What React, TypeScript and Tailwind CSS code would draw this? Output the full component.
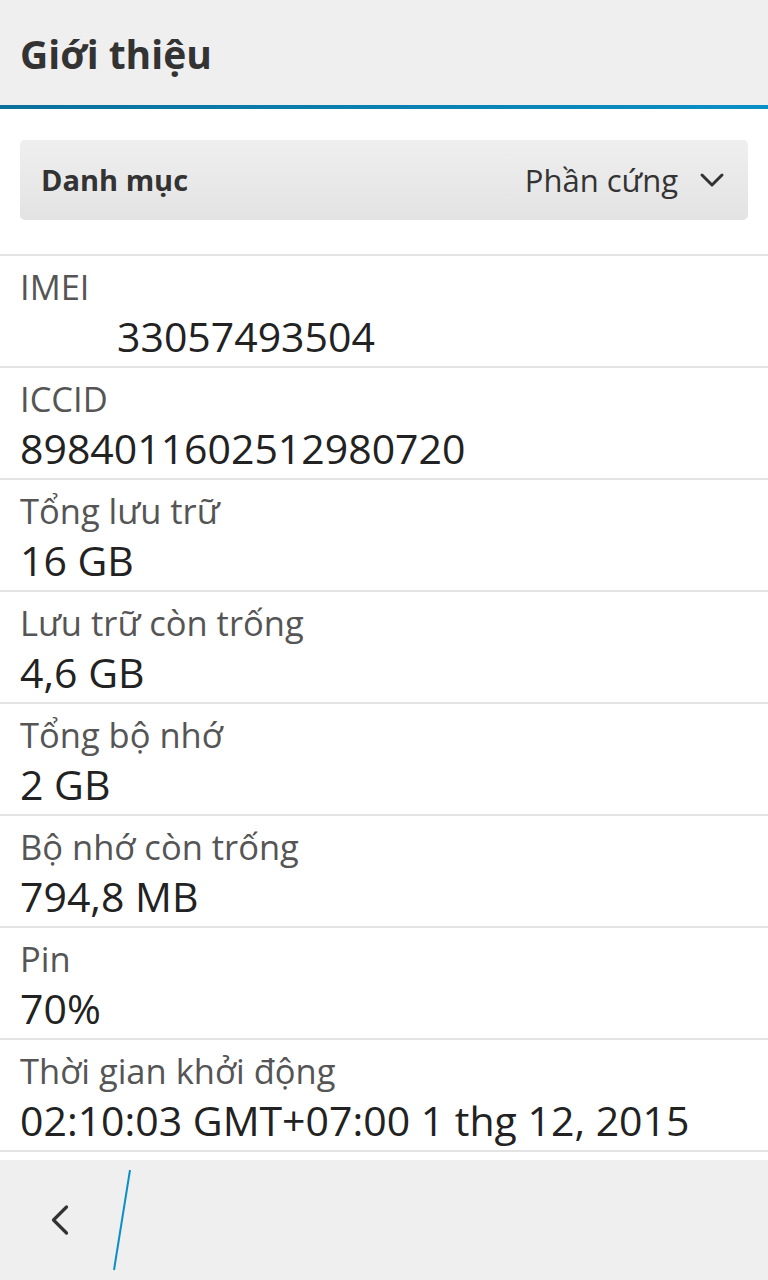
import { ChevronDown, ChevronLeft } from "lucide-react";

const rows = [
  { label: "IMEI", value: "33057493504", indent: true },
  { label: "ICCID", value: "898401160251298 0720".replace(" ", "") },
  { label: "Tổng lưu trữ", value: "16 GB" },
  { label: "Lưu trữ còn trống", value: "4,6 GB" },
  { label: "Tổng bộ nhớ", value: "2 GB" },
  { label: "Bộ nhớ còn trống", value: "794,8 MB" },
  { label: "Pin", value: "70%" },
  { label: "Thời gian khởi động", value: "02:10:03 GMT+07:00 1 thg 12, 2015" },
];

export default function App() {
  return (
    <div
      className="flex h-[1280px] w-[768px] flex-col bg-white"
      style={{ fontFamily: '"Open Sans", "Noto Sans", sans-serif' }}
    >
      <header className="flex h-[105px] items-start bg-[#efefef] pl-[20px] pt-[24px]">
        <h1 className="text-[39px] font-bold leading-[60px] text-[#333]">Giới thiệu</h1>
      </header>
      <div className="h-[4px] bg-gradient-to-r from-[#0a709c] to-[#0a90c6]" />

      <div className="px-[20px] pt-[31px] pb-[34px]">
        <div className="flex h-[80px] items-center rounded-[5px] bg-gradient-to-b from-[#efefef] to-[#e3e3e3] pl-[21px] pr-[16px]">
          <span className="text-[29px] font-bold text-[#333]">Danh mục</span>
          <span className="ml-auto text-[31px] text-[#333]">Phần cứng</span>
          <ChevronDown className="ml-[14px] h-[40px] w-[40px] text-[#333]" strokeWidth={1.8} />
        </div>
      </div>

      <div className="border-t-2 border-[#e3e3e3]">
        {rows.map((r) => (
          <div key={r.label} className="flex h-[112px] flex-col border-b-2 border-[#e3e3e3] px-[20px] pt-[11px]">
            <div className="text-[34.5px] leading-[40px] text-[#555]">{r.label}</div>
            <div className={`mt-[5px] text-[41px] leading-[48px] text-[#222] ${r.indent ? "pl-[97px]" : ""}`}>
              {r.value}
            </div>
          </div>
        ))}
      </div>

      <div className="mt-auto flex h-[120px] items-center bg-[#efefef]">
        <ChevronLeft className="ml-[34px] h-[52px] w-[52px] text-[#333]" strokeWidth={1.5} />
        <svg width="40" height="110" className="ml-[18px] self-start mt-[10px]">
          <line x1="26" y1="0" x2="10" y2="100" stroke="#0a90c6" strokeWidth="2" />
        </svg>
      </div>
    </div>
  );
}
